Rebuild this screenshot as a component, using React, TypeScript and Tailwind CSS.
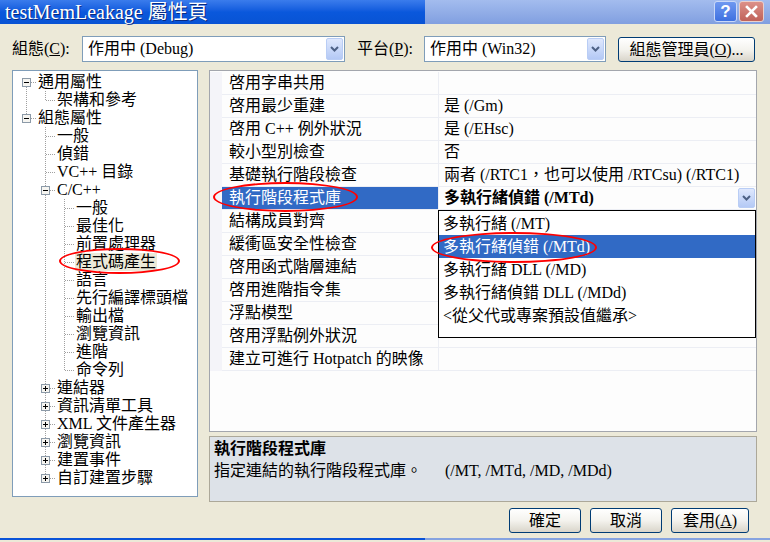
import React from "react";

type TreeItem = { label: string; level: number; exp?: "minus" | "plus"; sel?: boolean };

const tree: TreeItem[] = [
  { label: "通用屬性", level: 0, exp: "minus" },
  { label: "架構和參考", level: 1 },
  { label: "組態屬性", level: 0, exp: "minus" },
  { label: "一般", level: 1 },
  { label: "偵錯", level: 1 },
  { label: "VC++ 目錄", level: 1 },
  { label: "C/C++", level: 1, exp: "minus" },
  { label: "一般", level: 2 },
  { label: "最佳化", level: 2 },
  { label: "前置處理器", level: 2 },
  { label: "程式碼產生", level: 2, sel: true },
  { label: "語言", level: 2 },
  { label: "先行編譯標頭檔", level: 2 },
  { label: "輸出檔", level: 2 },
  { label: "瀏覽資訊", level: 2 },
  { label: "進階", level: 2 },
  { label: "命令列", level: 2 },
  { label: "連結器", level: 1, exp: "plus" },
  { label: "資訊清單工具", level: 1, exp: "plus" },
  { label: "XML 文件產生器", level: 1, exp: "plus" },
  { label: "瀏覽資訊", level: 1, exp: "plus" },
  { label: "建置事件", level: 1, exp: "plus" },
  { label: "自訂建置步驟", level: 1, exp: "plus" },
];

const props: [string, string][] = [
  ["啓用字串共用", ""],
  ["啓用最少重建", "是 (/Gm)"],
  ["啓用 C++ 例外狀況", "是 (/EHsc)"],
  ["較小型別檢查", "否"],
  ["基礎執行階段檢查", "兩者 (/RTC1，也可以使用 /RTCsu) (/RTC1)"],
  ["執行階段程式庫", "多執行緒偵錯 (/MTd)"],
  ["結構成員對齊", ""],
  ["緩衝區安全性檢查", ""],
  ["啓用函式階層連結", ""],
  ["啓用進階指令集", ""],
  ["浮點模型", ""],
  ["啓用浮點例外狀況", ""],
  ["建立可進行 Hotpatch 的映像", ""],
];

const options = [
  "多執行緒 (/MT)",
  "多執行緒偵錯 (/MTd)",
  "多執行緒 DLL (/MD)",
  "多執行緒偵錯 DLL (/MDd)",
  "<從父代或專案預設值繼承>",
];

// is there another sibling at this level further down?
const hasLater = (i: number, lvl: number) => {
  for (let j = i + 1; j < tree.length; j++) {
    if (tree[j].level < lvl) return false;
    if (tree[j].level === lvl) return true;
  }
  return false;
};

function Guides({ index }: { index: number }) {
  const item = tree[index];
  const L = item.level;
  const w = 23 + 19 * L;
  const cx = 13.5 + 19 * L;
  const dots = { stroke: "#a0a0a0", strokeDasharray: "1 1", strokeWidth: 1 };
  const verticals = [];
  for (let a = 0; a < L; a++) {
    if (hasLater(index, a)) {
      verticals.push(<line key={a} x1={13.5 + 19 * a} y1={0} x2={13.5 + 19 * a} y2={18} {...dots} />);
    }
  }
  return (
    <svg width={w} height={18} className="shrink-0">
      {verticals}
      {index > 0 && <line x1={cx} y1={0} x2={cx} y2={10} {...dots} />}
      {hasLater(index, L) && <line x1={cx} y1={10} x2={cx} y2={18} {...dots} />}
      <line x1={14 + 19 * L} y1={9.5} x2={23 + 19 * L} y2={9.5} {...dots} />
      {item.exp && (
        <g>
          <rect x={cx - 4} y={5.5} width={8} height={8} fill="#f6f5f1" stroke="#8c9aa8" />
          <line x1={cx - 2.5} y1={9.5} x2={cx + 2.5} y2={9.5} stroke="#000" />
          {item.exp === "plus" && <line x1={cx} y1={7} x2={cx} y2={12} stroke="#000" />}
        </g>
      )}
    </svg>
  );
}

function Chevron() {
  return (
    <svg width="9" height="6" viewBox="0 0 9 6">
      <path d="M1 1 L4.5 4.5 L8 1" fill="none" stroke="#4d6185" strokeWidth="2" />
    </svg>
  );
}

function DropButton() {
  return (
    <div className="flex w-[17px] items-center justify-center self-stretch rounded-[2px] border border-[#b9cdf5] bg-linear-to-b from-[#dfe8fd] to-[#b4c9f5]">
      <Chevron />
    </div>
  );
}

function Combo({ text, width }: { text: string; width: string }) {
  return (
    <div className={`flex h-[26px] items-center border border-[#7f9db9] bg-white p-px ${width}`}>
      <span className="flex-1 pl-[4px]">{text}</span>
      <DropButton />
    </div>
  );
}

function XpButton({ children, className }: { children: React.ReactNode; className: string }) {
  return (
    <div
      className={`flex h-[25px] items-center justify-center rounded-[3px] border border-[#003c74] bg-linear-to-b from-white via-[#f4f3ee] to-[#d9d5ca] ${className}`}
    >
      {children}
    </div>
  );
}

export default function App() {
  return (
    <div className="flex h-[542px] w-[770px] flex-col overflow-hidden bg-[#ece9d8] font-['Liberation_Serif','Noto_Sans_CJK_TC',serif] text-[16px] text-black">
      {/* title bar */}
      <div className="flex h-[24px] shrink-0">
        <div className="flex w-[425px] items-center bg-linear-to-b from-[#3a7cec] via-[#0a58dc] to-[#0853d4] pl-[5px] text-[20px] leading-[24px] text-white [text-shadow:1px_1px_0_#0a2a80]">
          testMemLeakage 屬性頁
        </div>
        <div className="flex flex-1 items-start justify-end gap-[2px] bg-linear-to-b from-[#a3bcee] to-[#819fe0] pr-[6px] pt-[1px]">
          <div className="flex h-[21px] w-[23px] items-center justify-center rounded-[3px] border border-[#c9d8f8] bg-linear-to-b from-[#6f98f0] to-[#3e70e0] font-['Liberation_Sans',sans-serif] text-[17px] font-bold leading-none text-white">
            ?
          </div>
          <div className="flex h-[21px] w-[25px] items-center justify-center rounded-[3px] border border-[#ead0cc] bg-linear-to-b from-[#dc9088] to-[#c0625a]">
            <svg width="13" height="13" viewBox="0 0 13 13">
              <path d="M2 2 L11 11 M11 2 L2 11" stroke="#fff" strokeWidth="2.6" strokeLinecap="square" />
            </svg>
          </div>
        </div>
      </div>

      {/* configuration row */}
      <div className="mt-[12px] flex h-[26px] shrink-0 items-center pl-[12px]">
        <span className="w-[70px]">
          組態(<span className="underline">C</span>):
        </span>
        <Combo text="作用中 (Debug)" width="w-[263px]" />
        <span className="ml-[12px] w-[67px]">
          平台(<span className="underline">P</span>):
        </span>
        <Combo text="作用中 (Win32)" width="w-[182px]" />
        <XpButton className="ml-[12px] w-[137px] self-end">
          組態管理員(<span className="underline">O</span>)...
        </XpButton>
      </div>

      {/* main area */}
      <div className="mt-[8px] flex h-[432px] shrink-0 pl-[12px]">
        {/* tree */}
        <div className="relative h-[427px] w-[186px] border border-[#7f9db9] bg-white pt-[2px]">
          {tree.map((item, i) => (
            <div key={i} className="flex h-[18px] items-center whitespace-nowrap">
              <Guides index={i} />
              <span className={`ml-px px-px leading-[18px] ${item.sel ? "bg-[#ece9d8]" : ""}`}>{item.label}</span>
            </div>
          ))}
          <div className="absolute left-[46px] top-[177px] h-[26px] w-[121px] rounded-[50%] border-2 border-[#ff0000]" />
        </div>

        {/* right column */}
        <div className="ml-[11px] flex w-[548px] flex-col">
          <div className="relative h-[362px] border border-[#a3a6ad] bg-[#fdfdfd] pt-px">
            {props.map(([name, value], i) => {
              const sel = i === 5;
              return (
                <div key={i} className="flex h-[23px] whitespace-nowrap">
                  <div className="w-[12px] bg-[#f4f4f9]" />
                  <div
                    className={`flex w-[216px] items-center border-b pl-[7px] ${
                      sel ? "border-[#eceef4] bg-[#316ac5] text-white" : "border-[#eceef4]"
                    }`}
                  >
                    {name}
                  </div>
                  <div className="flex flex-1 items-center border-b border-l border-[#eceef4] pl-[5px]">
                    {sel ? (
                      <>
                        <span className="flex-1 font-bold">{value}</span>
                        <div className="mr-px flex h-[20px]">
                          <DropButton />
                        </div>
                      </>
                    ) : (
                      <span>{value}</span>
                    )}
                  </div>
                </div>
              );
            })}

            {/* open dropdown list */}
            <div className="absolute left-[228px] top-[139px] h-[128px] w-[318px] border border-black bg-white pt-px">
              {options.map((o, i) => (
                <div
                  key={i}
                  className={`flex h-[23px] items-center whitespace-nowrap pl-[4px] ${i === 1 ? "bg-[#316ac5] text-white" : ""}`}
                >
                  {o}
                </div>
              ))}
            </div>

            <div className="absolute left-[3px] top-[111px] h-[30px] w-[145px] rounded-[50%] border-2 border-[#ff0000]" />
            <div className="absolute left-[221px] top-[161px] h-[31px] w-[166px] rounded-[50%] border-2 border-[#ff0000]" />
          </div>

          <div className="mt-[4px] h-[66px] border border-[#aca899] bg-[#dde2e8] pl-[4px] pt-px">
            <div className="font-bold leading-[22px]">執行階段程式庫</div>
            <div className="flex leading-[22px]">
              <span>指定連結的執行階段程式庫。</span>
              <span className="ml-[23px]">(/MT, /MTd, /MD, /MDd)</span>
            </div>
          </div>
        </div>
      </div>

      {/* dialog buttons */}
      <div className="mt-[6px] flex shrink-0 justify-end gap-[9px] pr-[21px]">
        <XpButton className="w-[72px]">確定</XpButton>
        <XpButton className="w-[72px]">取消</XpButton>
        <XpButton className="w-[78px]">
          套用(<span className="underline">A</span>)
        </XpButton>
      </div>

      {/* window frame bottom edge */}
      <div className="mt-[5px] flex h-[2px] shrink-0">
        <div className="w-[425px] bg-[#0a53d8]" />
        <div className="flex-1 bg-[#86a3e0]" />
      </div>
    </div>
  );
}
